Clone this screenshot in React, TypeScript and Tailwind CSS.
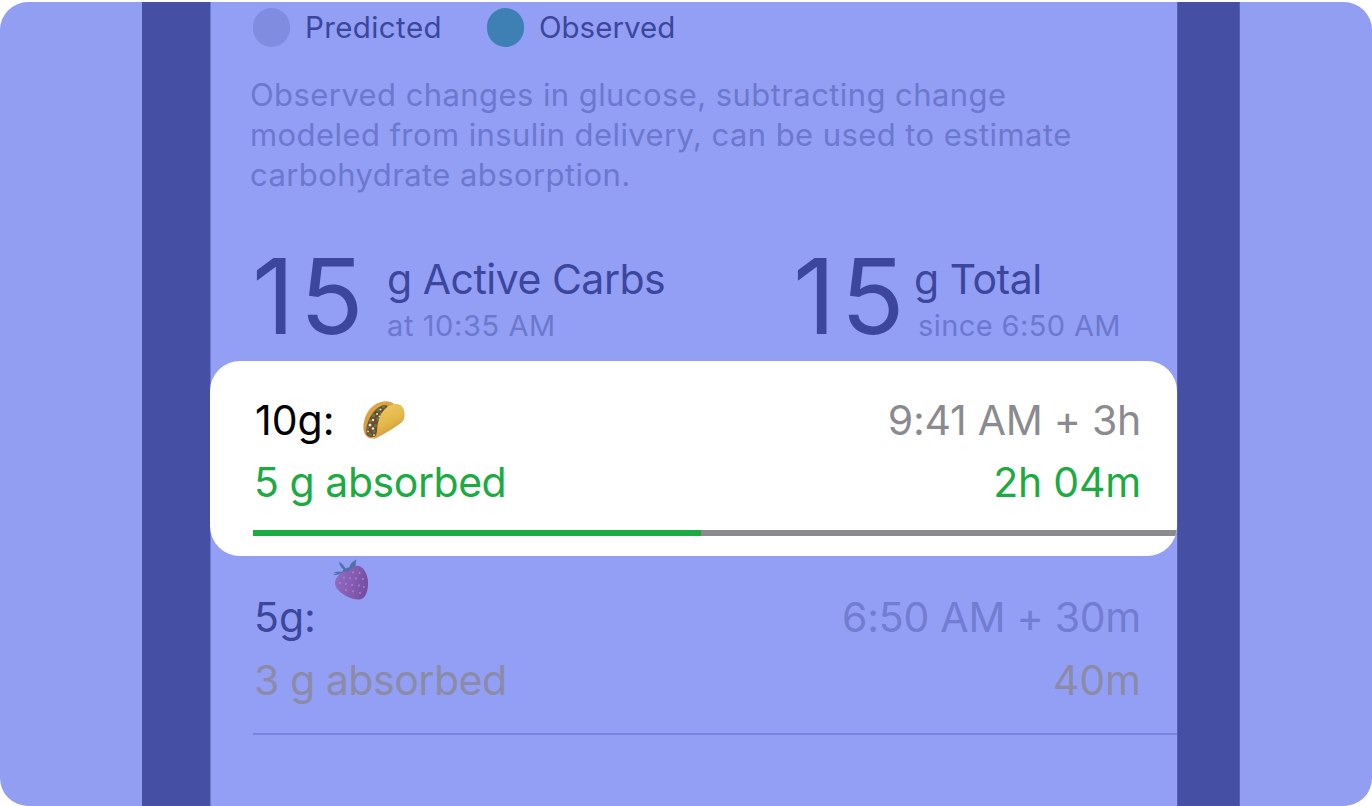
import type { ReactNode } from 'react';

function Taco() {
  return (
    <svg viewBox="0 0 42 38" className="h-[38px] w-[42px]" aria-hidden="true">
      <defs>
        <linearGradient id="shellFront" x1="0.2" y1="0" x2="0.7" y2="1">
          <stop offset="0" stopColor="#eecb62" />
          <stop offset="0.55" stopColor="#e4b74a" />
          <stop offset="1" stopColor="#c98c31" />
        </linearGradient>
        <linearGradient id="shellBack" x1="0" y1="0" x2="0.3" y2="1">
          <stop offset="0" stopColor="#dfa945" />
          <stop offset="1" stopColor="#cf9440" />
        </linearGradient>
      </defs>
      <path d="M8 37.500C2 36 0 31 0.500 24 1.500 13 8 4 17 1.200 23-.4 28 .2 31 3L14 35Z" fill="url(#shellBack)" />
      <path d="M3.500 33C2.500 25 6 16 12 9.500 15.500 5.500 20 3.500 24.500 4.500L16 35 9 36C6 36 4 35 3.500 33Z" fill="#6f4a2f" />
      <g fill="#55853c">
        <circle cx="20.500" cy="6" r="1.600" />
        <circle cx="15" cy="9" r="1.700" />
        <circle cx="18" cy="12.500" r="1.500" />
        <circle cx="10.500" cy="14.500" r="1.800" />
        <circle cx="14.500" cy="18" r="1.500" />
        <circle cx="7.500" cy="20" r="1.600" />
        <circle cx="12.500" cy="24.500" r="1.500" />
        <circle cx="4.800" cy="27" r="1.400" />
        <circle cx="11" cy="30.500" r="1.400" />
        <circle cx="7" cy="33.500" r="1.400" />
      </g>
      <g fill="#e3e4dc">
        <circle cx="17.500" cy="8.500" r="1" />
        <circle cx="14" cy="13" r="1" />
        <circle cx="16.500" cy="15.500" r="0.900" />
        <circle cx="10" cy="19" r="1.200" />
        <circle cx="7" cy="24" r="1.500" />
        <circle cx="10" cy="27.500" r="1.300" />
        <circle cx="5" cy="30.500" r="0.900" />
        <circle cx="11" cy="34" r="0.900" />
      </g>
      <g fill="#8d4232">
        <circle cx="13" cy="21" r="1" />
        <circle cx="8.500" cy="30.500" r="1" />
      </g>
      <path d="M9 37.500C13 36.500 13.800 33 14.200 28 14.800 20 17 13.500 21.500 8.500 26 3.500 33 1.500 37.500 4 40.500 6 42 10.500 41.500 15 41.200 18.500 40 20.500 36.500 23 29 28.500 21 33 14 36.800 12 38 10.500 38 9 37.500Z" fill="url(#shellFront)" />
    </svg>
  );
}

function Strawberry() {
  return (
    <svg viewBox="0 0 36 42" className="h-[42px] w-[36px]" aria-hidden="true">
      <defs>
        <linearGradient id="berry" x1="0" y1="0.4" x2="1" y2="0.600">
          <stop offset="0" stopColor="#9069c4" />
          <stop offset="0.550" stopColor="#855bb0" />
          <stop offset="1" stopColor="#744c9f" />
        </linearGradient>
      </defs>
      <path d="M11 13C15 9 20 6 26 7 32 9 35 17 35 24 35 32 33 39 27 40.500 19 41.500 7 35 3 28 0 22 4 16 11 13Z" fill="url(#berry)" />
      <path d="M0 14C3 12.500 6 12.500 9 13L10.500 10.500C8 8.500 6.500 6 6 3 9 4 11 7 12.500 9.500L16.500 8C17 5 19.500 2 23.500 .5 22.500 3 23 5 22.500 7.500L18 10 15 12.500 11 13C8 15 3 16.500 0 16 2 15 3 14.500 4 14Z" fill="#5070a8" />
      <g fill="#a58acb">
        <circle cx="20" cy="13.500" r="0.900" />
        <circle cx="26.500" cy="14" r="0.900" />
        <circle cx="11" cy="18.500" r="0.900" />
        <circle cx="17" cy="19" r="0.900" />
        <circle cx="23" cy="19.500" r="0.900" />
        <circle cx="30" cy="20" r="0.900" />
        <circle cx="7" cy="24" r="0.900" />
        <circle cx="13" cy="25" r="0.900" />
        <circle cx="19" cy="26" r="0.900" />
        <circle cx="26" cy="26.500" r="0.900" />
        <circle cx="31" cy="28" r="0.900" />
        <circle cx="13" cy="31" r="0.900" />
        <circle cx="20" cy="32.500" r="0.900" />
        <circle cx="27" cy="34" r="0.900" />
      </g>
    </svg>
  );
}

function Stat({ value, label, note, className }: { value: string; label: ReactNode; note: ReactNode; className: string }) {
  return (
    <div className={className}>
      <span className="w-[135px] shrink-0 text-[105px] leading-[92px] tracking-[5px]">{value}</span>
      <div className="flex flex-col pt-[5px]">
        {label}
        {note}
      </div>
    </div>
  );
}

export default function App() {
  return (
    <main className="h-[806px] w-[1372px] overflow-hidden bg-white pt-[2px] font-['Inter',sans-serif] whitespace-nowrap">
      <div className="flex h-[804px] overflow-hidden rounded-[28px] bg-[#929ef2]">
        <div className="w-[142px] shrink-0" />
        <div className="w-[68px] shrink-0 bg-[#4550a4]" />
        <section className="flex w-[967px] shrink-0 flex-col border-l border-[#6f7bcb] bg-[#939ff5] text-[#3b469c]">
          <div className="flex h-[51px] items-center pl-[42px] text-[29.5px]">
            <span className="h-[39px] w-[37px] rounded-full bg-[#808cdf]" />
            <span className="ml-[15px] w-[182px] tracking-[0.4px]">Predicted</span>
            <span className="h-[39px] w-[37px] rounded-full bg-[#3e80b3]" />
            <span className="ml-[15px]">Observed</span>
          </div>
          <p className="mt-[22px] h-[120px] pl-[39px] text-[31px] leading-[40px] tracking-[0.42px] text-[#6c78cd]">
            <span className="block">Observed changes in glucose, subtracting change</span>
            <span className="block">modeled from insulin delivery, can be used to estimate</span>
            <span className="block">carbohydrate absorption.</span>
          </p>
          <div className="mt-[55px] flex h-[111px]">
            <Stat
              className="flex w-[541px] pl-[41px]"
              value="15"
              label={<span className="text-[41px] leading-[48px] tracking-[-0.5px]">g Active Carbs</span>}
              note={<span className="text-[29px] leading-[46px] tracking-[0.6px] text-[#6c78cd]">at 10:35 AM</span>}
            />
            <Stat
              className="flex pl-[41px] [&>div]:-ml-[14px]"
              value="15"
              label={<span className="text-[41px] leading-[48px] tracking-[-0.5px]">g Total</span>}
              note={<span className="pl-[4px] text-[29px] leading-[46px] tracking-[0.4px] text-[#6c78cd]">since 6:50 AM</span>}
            />
          </div>
          <article className="-ml-px flex h-[195px] shrink-0 flex-col overflow-hidden rounded-[30px] bg-white pt-[28px] pl-[43px] text-[41px] leading-[62px]">
            <div className="flex justify-between pr-[36px] pl-[2px] text-[#8b8b8f]">
              <span className="flex items-center gap-[28px] text-black">
                <span>10g:</span>
                <span className="-mt-[1px]">
                  <Taco />
                </span>
              </span>
              <span className="tracking-[-0.25px]">9:41 AM + 3h</span>
            </div>
            <div className="flex justify-between pr-[36px] pl-px text-[#1bab42]">
              <span className="tracking-[-0.45px]">5 g absorbed</span>
              <span className="tracking-[-0.2px]">2h 04m</span>
            </div>
            <div className="mt-[17px] h-[6px] shrink-0 bg-[#8b8b8f]">
              <div className="h-full w-[448px] bg-[#1bab42]" />
            </div>
          </article>
          <article className="ml-[42px] flex h-[179px] shrink-0 flex-col border-b-2 border-[#7783dc] pt-[30px] text-[41px] leading-[63px]">
            <div className="flex justify-between pr-[36px] pl-px">
              <span className="flex gap-[17px]">
                <span>5g:</span>
                <span className="-mt-[27px]">
                  <Strawberry />
                </span>
              </span>
              <span className="tracking-[-0.25px] text-[#717dd0]">6:50 AM + 30m</span>
            </div>
            <div className="flex justify-between pr-[36px] pl-px text-[#8b8ba7]">
              <span className="tracking-[-0.45px]">3 g absorbed</span>
              <span>40m</span>
            </div>
          </article>
        </section>
        <div className="w-[63px] shrink-0 border-x border-[#5661b3] bg-[#4550a4]" />
      </div>
    </main>
  );
}
